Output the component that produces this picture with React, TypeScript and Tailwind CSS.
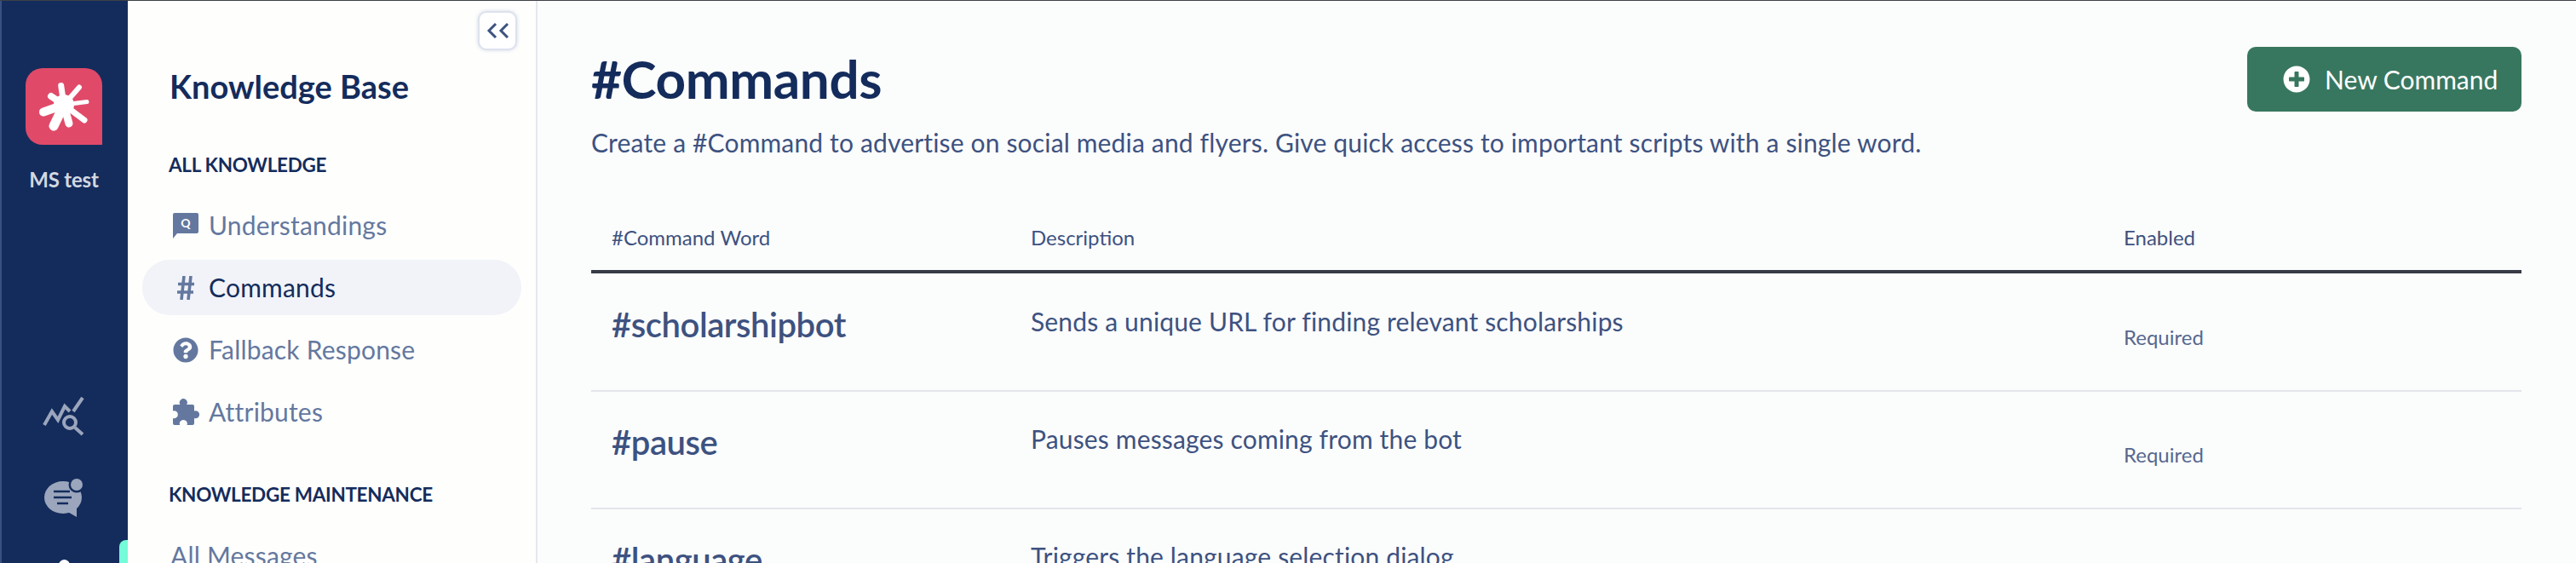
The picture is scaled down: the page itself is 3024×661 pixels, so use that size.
import { FaPlusCircle, FaQuestionCircle } from "react-icons/fa"

const commands = [
  { word: "#scholarshipbot", text: "Sends a unique URL for finding relevant scholarships" },
  { word: "#pause", text: "Pauses messages coming from the bot" },
  { word: "#language", text: "Triggers the language selection dialog" },
]

function LogoMark() {
  const spokes = [
    { d: "M45 43 41.7 20.5", w: 7 },
    { d: "M45 43 63 22.5", w: 6 },
    { d: "M45 43 72 39.5", w: 5 },
    { d: "M45 43 69 61", w: 7 },
    { d: "M45 43 51 65", w: 9 },
    { d: "M45 43 33 68", w: 11 },
    { d: "M45 43 21 51.5", w: 10 },
    { d: "M45 43 30 33", w: 8 },
  ]
  return (
    <svg viewBox="0 0 90 90" className="h-[90px] w-[90px]">
      <path d="M0 20A20 20 0 0 1 20 0h50a20 20 0 0 1 20 20v70H20A20 20 0 0 1 0 70z" fill="#e04a68" />
      <g stroke="#fff" strokeLinecap="round" fill="none">
        {spokes.map((s) => (
          <path key={s.d} d={s.d} strokeWidth={s.w} />
        ))}
      </g>
      <circle cx="45" cy="43" r="12" fill="#fff" />
    </svg>
  )
}

function AnalyticsIcon() {
  return (
    <svg viewBox="0 0 52 49" className="h-[49px] w-[52px]" fill="none" stroke="#9ba6bd" strokeWidth="4">
      <path d="M3 35 12 19 19 29 27 13 33 19" />
      <path d="M37 19 48 3" />
      <circle cx="33" cy="32" r="7" />
      <path d="M39 38 48 46" />
    </svg>
  )
}

function ChatIcon() {
  return (
    <svg viewBox="0 0 50 50" className="h-[50px] w-[50px]">
      <ellipse cx="24" cy="24" rx="22" ry="19" fill="#9ba6bd" />
      <path d="M26 39 40 47V36z" fill="#9ba6bd" />
      <circle cx="40" cy="9" r="9.5" fill="#142c5c" />
      <circle cx="40" cy="9" r="7" fill="#9ba6bd" />
      <path d="M13 17h19M13 24h21M17 31h13" stroke="#142c5c" strokeWidth="2.5" />
    </svg>
  )
}

function QuestionBubble() {
  return (
    <svg viewBox="0 0 30 30" className="h-[30px] w-[30px]">
      <path d="M2 0h26a2 2 0 0 1 2 2v20a2 2 0 0 1-2 2H5L0 30V2a2 2 0 0 1 2-2z" fill="#64789f" />
      <text x="15" y="17" textAnchor="middle" fontSize="14" fontWeight="700" fill="#fff" fontFamily="Lato, sans-serif">Q</text>
    </svg>
  )
}

function HashIcon() {
  return (
    <svg viewBox="0 0 20 28" className="ml-[5px] h-[28px] w-[20px]" fill="none" stroke="#64789f" strokeWidth="3.6">
      <path d="M8 0 5 28M16 0l-3 28M1 9.5h19M0 19h19" />
    </svg>
  )
}

function PuzzleIcon() {
  return (
    <svg viewBox="0 0 31 31" className="h-[31px] w-[31px]" fill="#64789f">
      <path d="M2 7H8.5a4.5 4.5 0 1 1 7.6 0H23a2 2 0 0 1 2 2v5.5a4.5 4.5 0 1 1 0 8.4V29a2 2 0 0 1-2 2H16.5a4.5 4.5 0 1 0-8.4 0H2a2 2 0 0 1-2-2V23a4.5 4.5 0 1 0 0-8.6V9a2 2 0 0 1 2-2z" />
    </svg>
  )
}

function NavItem({ icon, label, active }: { icon?: React.ReactNode; label: string; active?: boolean }) {
  return (
    <div className={`flex h-[65px] items-center rounded-[32px] pl-[36px] text-[30px] tracking-[0.2px] ${active ? "bg-[#f1f3f8] text-[#142c5c]" : "text-[#64789f]"}`}>
      {icon && <span className="flex w-[42px] justify-start">{icon}</span>}
      <span className={icon ? "" : "-ml-[3px]"}>{label}</span>
    </div>
  )
}

export default function App() {
  return (
    <div className="flex h-[661px] flex-col overflow-hidden bg-[#fbfcfc] font-['Lato',sans-serif]">
      <div className="h-px shrink-0 bg-[#3d4144]" />
      <div className="flex min-h-0 flex-1">
        <aside className="relative flex w-[150px] shrink-0 flex-col items-center overflow-hidden border-l-2 border-[#3a5080] bg-[#142c5c]">
          <div className="-ml-[2px] mt-[79px] shrink-0">
            <LogoMark />
          </div>
          <div className="-ml-[2px] mt-[26px] h-[30px] shrink-0 text-[24px] font-bold leading-[30px] tracking-[-0.2px] text-[#d3d8e2]">MS test</div>
          <div className="-ml-[2px] mt-[238px] shrink-0">
            <AnalyticsIcon />
          </div>
          <div className="-ml-[2px] mt-[47px] shrink-0">
            <ChatIcon />
          </div>
          <div className="-ml-[2px] mt-[47px] h-[14px] w-[13px] shrink-0 rounded-full bg-white" />
          <div className="absolute right-0 top-[633px] h-[40px] w-[10px] rounded-tl-[8px] bg-[#74fbd7]" />
        </aside>

        <nav className="relative w-[481px] shrink-0 overflow-hidden border-r-2 border-[#e5e7ee] bg-[#fefefd]">
          <button className="absolute right-[22px] top-[12px] flex h-[46px] w-[46px] items-center justify-center rounded-[10px] border-2 border-[#dde2ee] bg-white shadow-[0_0_4px_rgba(130,145,180,0.35)]">
            <svg viewBox="0 0 26 18" className="h-[18px] w-[26px]" fill="none" stroke="#3d5280" strokeWidth="3">
              <path d="M11 1 3 9l8 8M25 1l-8 8 8 8" />
            </svg>
          </button>
          <div className="ml-[49px] mt-[78px] h-[44px] text-[38px] font-bold leading-[44px] text-[#142c5c]">Knowledge Base</div>
          <div className="ml-[48px] mt-[56px] h-[30px] text-[22.5px] font-bold leading-[30px] tracking-[-0.3px] text-[#142c5c]">ALL KNOWLEDGE</div>
          <div className="ml-[17px] mr-[17px] mt-[23px] flex flex-col gap-[8px]">
            <NavItem icon={<QuestionBubble />} label="Understandings" />
            <NavItem icon={<HashIcon />} label="Commands" active />
            <NavItem icon={<FaQuestionCircle className="h-[30px] w-[30px]" />} label="Fallback Response" />
            <NavItem icon={<PuzzleIcon />} label="Attributes" />
          </div>
          <div className="ml-[48px] mt-[50px] h-[30px] text-[22.5px] font-bold leading-[30px] tracking-[-0.3px] text-[#142c5c]">KNOWLEDGE MAINTENANCE</div>
          <div className="ml-[17px] mr-[17px] mt-[24px]">
            <NavItem label="All Messages" />
          </div>
        </nav>

        <main className="min-w-0 flex-1 pl-[63px] pr-[64px]">
          <div className="mt-[54px] flex items-start justify-between">
            <h1 className="text-[62px] font-bold leading-[74px] tracking-[-0.4px] text-[#142c5c]">#Commands</h1>
            <button className="flex h-[76px] w-[322px] items-center rounded-[10px] bg-[#38775f] pl-[42px] text-[30px] text-white">
              <FaPlusCircle className="h-[32px] w-[32px]" />
              <span className="ml-[17px]">New Command</span>
            </button>
          </div>
          <p className="mt-[16px] h-[40px] text-[30px] leading-[40px] tracking-[0.16px] text-[#3d5280]">
            Create a #Command to advertise on social media and flyers. Give quick access to important scripts with a single word.
          </p>
          <div className="mt-[72px] grid grid-cols-[492px_1283px_1fr] border-b-4 border-[#363b45] px-[24px] pb-[18px] text-[24px] leading-[40px] text-[#3d5280]">
            <div>#Command Word</div>
            <div>Description</div>
            <div>Enabled</div>
          </div>
          <div className="mt-px">
            {commands.map((c) => (
              <div key={c.word} className="grid h-[138px] grid-cols-[492px_1283px_1fr] border-b-2 border-[#e3e5ec] px-[24px]">
                <div className="pt-[34px] text-[40px] font-semibold leading-[50px] tracking-[-0.45px] text-[#3d5280]">{c.word}</div>
                <div className="pt-[35px] text-[30px] leading-[40px] tracking-[0.16px] text-[#3d5280]">{c.text}</div>
                <div className="pt-[59px] text-[24px] leading-[30px] text-[#56688f]">Required</div>
              </div>
            ))}
          </div>
        </main>
      </div>
    </div>
  )
}
